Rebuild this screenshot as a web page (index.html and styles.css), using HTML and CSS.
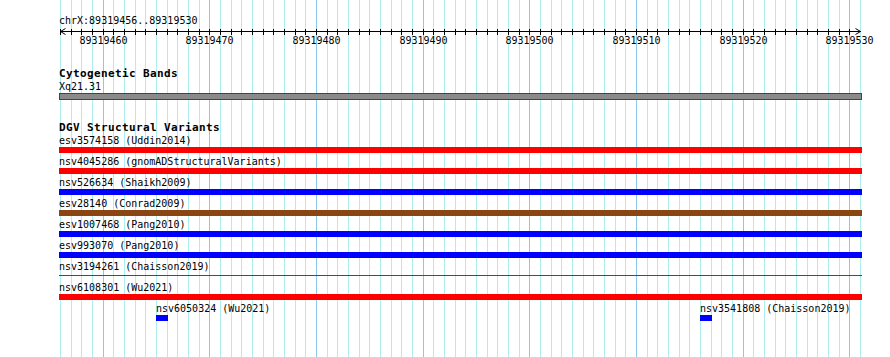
FILE: index.html
```html
<!DOCTYPE html>
<html>
<head>
<meta charset="utf-8">
<title>chrX:89319456..89319530</title>
<link rel="stylesheet" href="styles.css">
</head>
<body>
<div class="page">
  <svg class="grid" width="890" height="357" viewBox="0 0 890 357">
    <path class="grid-minor" d="M60.5 0V357M71.5 0V357M81.5 0V357M92.5 0V357M113.5 0V357M124.5 0V357M135.5 0V357M145.5 0V357M156.5 0V357M167.5 0V357M177.5 0V357M188.5 0V357M199.5 0V357M220.5 0V357M231.5 0V357M241.5 0V357M252.5 0V357M263.5 0V357M273.5 0V357M284.5 0V357M295.5 0V357M305.5 0V357M327.5 0V357M337.5 0V357M348.5 0V357M359.5 0V357M369.5 0V357M380.5 0V357M391.5 0V357M401.5 0V357M412.5 0V357M433.5 0V357M444.5 0V357M455.5 0V357M465.5 0V357M476.5 0V357M487.5 0V357M497.5 0V357M508.5 0V357M519.5 0V357M540.5 0V357M551.5 0V357M561.5 0V357M572.5 0V357M583.5 0V357M593.5 0V357M604.5 0V357M615.5 0V357M625.5 0V357M647.5 0V357M657.5 0V357M668.5 0V357M679.5 0V357M689.5 0V357M700.5 0V357M711.5 0V357M721.5 0V357M732.5 0V357M753.5 0V357M764.5 0V357M775.5 0V357M785.5 0V357M796.5 0V357M807.5 0V357M817.5 0V357M828.5 0V357M839.5 0V357M860.5 0V357"/>
    <path class="grid-major" d="M103.5 0V357M209.5 0V357M316.5 0V357M423.5 0V357M529.5 0V357M636.5 0V357M743.5 0V357M849.5 0V357"/>
  </svg>

  <div class="content">
    <div class="loc">chrX:89319456..89319530</div>

    <svg class="ruler" width="890" height="20" viewBox="0 0 890 20">
      <path class="ruler-line" d="M60 5.5H861"/>
      <path class="ruler-line" d="M60.5 3V9M71.5 3V9M81.5 3V9M92.5 3V9M103.5 3V9M113.5 3V9M124.5 3V9M135.5 3V9M145.5 3V9M156.5 3V9M167.5 3V9M177.5 3V9M188.5 3V9M199.5 3V9M209.5 3V9M220.5 3V9M231.5 3V9M241.5 3V9M252.5 3V9M263.5 3V9M273.5 3V9M284.5 3V9M295.5 3V9M305.5 3V9M316.5 3V9M327.5 3V9M337.5 3V9M348.5 3V9M359.5 3V9M369.5 3V9M380.5 3V9M391.5 3V9M401.5 3V9M412.5 3V9M423.5 3V9M433.5 3V9M444.5 3V9M455.5 3V9M465.5 3V9M476.5 3V9M487.5 3V9M497.5 3V9M508.5 3V9M519.5 3V9M529.5 3V9M540.5 3V9M551.5 3V9M561.5 3V9M572.5 3V9M583.5 3V9M593.5 3V9M604.5 3V9M615.5 3V9M625.5 3V9M636.5 3V9M647.5 3V9M657.5 3V9M668.5 3V9M679.5 3V9M689.5 3V9M700.5 3V9M711.5 3V9M721.5 3V9M732.5 3V9M743.5 3V9M753.5 3V9M764.5 3V9M775.5 3V9M785.5 3V9M796.5 3V9M807.5 3V9M817.5 3V9M828.5 3V9M839.5 3V9M849.5 3V9"/>
      <path class="ruler-arrow" d="M65.5 2.5L60.5 5.5L65.5 8.5M855.5 2.5L860.5 5.5L855.5 8.5"/>
      <text class="ruler-label" x="103.5" y="18">89319460</text>
      <text class="ruler-label" x="209.5" y="18">89319470</text>
      <text class="ruler-label" x="316.5" y="18">89319480</text>
      <text class="ruler-label" x="423.5" y="18">89319490</text>
      <text class="ruler-label" x="529.5" y="18">89319500</text>
      <text class="ruler-label" x="636.5" y="18">89319510</text>
      <text class="ruler-label" x="743.5" y="18">89319520</text>
      <text class="ruler-label" x="849.5" y="18">89319530</text>
    </svg>

    <section class="track track-cyto">
      <h2 class="track-title">Cytogenetic Bands</h2>
      <div class="lane lane-cyto">
        <div class="feat" style="left:59px;width:803px">
          <div class="feat-label">Xq21.31</div>
          <div class="band"></div>
        </div>
      </div>
    </section>

    <section class="track track-dgv">
      <h2 class="track-title">DGV Structural Variants</h2>
      <div class="lane">
        <div class="feat" style="left:59px;width:803px"><div class="feat-label">esv3574158 (Uddin2014)</div><div class="bar bar-red"></div></div>
      </div>
      <div class="lane">
        <div class="feat" style="left:59px;width:803px"><div class="feat-label">nsv4045286 (gnomADStructuralVariants)</div><div class="bar bar-red"></div></div>
      </div>
      <div class="lane">
        <div class="feat" style="left:59px;width:803px"><div class="feat-label">nsv526634 (Shaikh2009)</div><div class="bar bar-blue"></div></div>
      </div>
      <div class="lane">
        <div class="feat" style="left:59px;width:803px"><div class="feat-label">esv28140 (Conrad2009)</div><div class="bar bar-brown"></div></div>
      </div>
      <div class="lane">
        <div class="feat" style="left:59px;width:803px"><div class="feat-label">esv1007468 (Pang2010)</div><div class="bar bar-blue"></div></div>
      </div>
      <div class="lane">
        <div class="feat" style="left:59px;width:803px"><div class="feat-label">esv993070 (Pang2010)</div><div class="bar bar-blue"></div></div>
      </div>
      <div class="lane">
        <div class="feat" style="left:59px;width:803px"><div class="feat-label">nsv3194261 (Chaisson2019)</div><div class="bar bar-thin"></div></div>
      </div>
      <div class="lane">
        <div class="feat" style="left:59px;width:803px"><div class="feat-label">nsv6108301 (Wu2021)</div><div class="bar bar-red"></div></div>
      </div>
      <div class="lane">
        <div class="feat" style="left:156px;width:12px"><div class="feat-label">nsv6050324 (Wu2021)</div><div class="bar bar-blue"></div></div>
        <div class="feat" style="left:700px;width:12px"><div class="feat-label">nsv3541808 (Chaisson2019)</div><div class="bar bar-blue"></div></div>
      </div>
    </section>
  </div>
</div>
</body>
</html>
```

FILE: styles.css
```css
html, body {
  margin: 0;
  padding: 0;
  background: #ffffff;
}

body {
  font-family: "DejaVu Sans Mono", "Liberation Mono", monospace;
  font-size: 10px;
  color: #000000;
}

.page {
  position: relative;
  width: 890px;
  height: 357px;
  overflow: hidden;
  background: #ffffff;
}

.grid {
  position: absolute;
  top: 0;
  left: 0;
  z-index: 0;
  shape-rendering: crispEdges;
}

.grid-minor {
  stroke: #aeeeee;
  stroke-width: 1;
  fill: none;
}

.grid-major {
  stroke: #8cc8ec;
  stroke-width: 1;
  fill: none;
}

.content {
  position: relative;
  z-index: 1;
  padding-top: 15px;
}

.loc {
  padding-left: 59px;
  line-height: 11px;
  height: 11px;
  white-space: nowrap;
}

.ruler {
  display: block;
}

.ruler-line {
  stroke: #000000;
  stroke-width: 1;
  fill: none;
  shape-rendering: crispEdges;
}

.ruler-arrow {
  stroke: #000000;
  stroke-width: 1;
  fill: none;
}

.ruler-label {
  font-family: "DejaVu Sans Mono", "Liberation Mono", monospace;
  font-size: 10px;
  text-anchor: middle;
  fill: #000000;
}

.track-title {
  margin: 22px 0 0 0;
  padding-left: 59px;
  font-size: 11px;
  font-weight: bold;
  letter-spacing: 0.38px;
  line-height: 12px;
  height: 12px;
  white-space: nowrap;
}

.lane {
  position: relative;
  height: 21px;
}

.lane-cyto {
  height: 20px;
}

.feat {
  position: absolute;
  top: 1px;
}

.feat-label {
  line-height: 11px;
  height: 11px;
  white-space: nowrap;
}

.band {
  margin-top: 1px;
  height: 5px;
  background: #8a8a8a;
  border: 1px solid #444444;
}

.bar {
  margin-top: 1px;
  height: 6px;
}

.bar-red {
  background: #ff0000;
}

.bar-blue {
  background: #0000ff;
}

.bar-brown {
  background: #8b4513;
}

.bar-thin {
  margin-top: 3px;
  height: 1px;
  background: #ff0000;
}
```
